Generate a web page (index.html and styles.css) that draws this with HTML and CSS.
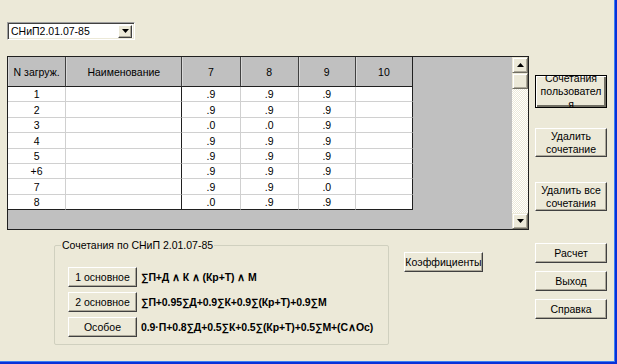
FILE: index.html
```html
<!DOCTYPE html>
<html lang="ru">
<head>
<meta charset="utf-8">
<title>Сочетания</title>
<link rel="stylesheet" href="styles.css">
</head>
<body>
<div class="window">
  <div class="combo">
    <span class="combo-text">СНиП2.01.07-85</span>
    <span class="combo-btn"><svg width="7" height="4" viewBox="0 0 7 4"><path d="M0 0h7L3.5 4z" fill="#000"/></svg></span>
  </div>

  <div class="middle">
    <div class="grid">
      <div class="grid-body">
        <table class="table">
          <colgroup>
            <col class="c1"><col class="c2"><col class="c3"><col class="c3"><col class="c4"><col class="c4">
          </colgroup>
          <thead>
            <tr><th>N загруж.</th><th>Наименование</th><th>7</th><th>8</th><th>9</th><th class="last">10</th></tr>
          </thead>
          <tbody>
            <tr><td>1</td><td class="name"></td><td>.9</td><td>.9</td><td>.9</td><td class="last"></td></tr>
            <tr><td>2</td><td class="name"></td><td>.9</td><td>.9</td><td>.9</td><td class="last"></td></tr>
            <tr><td>3</td><td class="name"></td><td>.0</td><td>.0</td><td>.9</td><td class="last"></td></tr>
            <tr><td>4</td><td class="name"></td><td>.9</td><td>.9</td><td>.9</td><td class="last"></td></tr>
            <tr><td>5</td><td class="name"></td><td>.9</td><td>.9</td><td>.9</td><td class="last"></td></tr>
            <tr><td>+6</td><td class="name"></td><td>.9</td><td>.9</td><td>.9</td><td class="last"></td></tr>
            <tr><td>7</td><td class="name"></td><td>.9</td><td>.9</td><td>.0</td><td class="last"></td></tr>
            <tr class="lastrow"><td>8</td><td class="name"></td><td>.0</td><td>.9</td><td>.9</td><td class="last"></td></tr>
          </tbody>
        </table>
      </div>
      <div class="vscroll">
        <div class="sb-btn"><svg width="7" height="4" viewBox="0 0 7 4"><path d="M3.5 0L7 4H0z" fill="#000"/></svg></div>
        <div class="sb-btn sb-thumb"></div>
        <div class="sb-track"></div>
        <div class="sb-btn"><svg width="7" height="4" viewBox="0 0 7 4"><path d="M0 0h7L3.5 4z" fill="#000"/></svg></div>
      </div>
    </div>

    <div class="side">
      <button class="btn btn-default btn-user"><span class="clip">Сочетания<br>пользовател<br>я</span></button>
      <button class="btn btn-del">Удалить<br>сочетание</button>
      <button class="btn btn-delall">Удалить все<br>сочетания</button>
    </div>
  </div>

  <div class="bottom">
    <div class="group">
      <span class="group-label">Сочетания по СНиП 2.01.07-85</span>
      <div class="group-row">
        <button class="btn btn-small">1 основное</button>
        <span class="formula">∑П+Д ∧ К ∧ (Кр+Т) ∧ М</span>
      </div>
      <div class="group-row">
        <button class="btn btn-small">2 основное</button>
        <span class="formula">∑П+0.95∑Д+0.9∑К+0.9∑(Кр+Т)+0.9∑М</span>
      </div>
      <div class="group-row">
        <button class="btn btn-small">Особое</button>
        <span class="formula">0.9·П+0.8∑Д+0.5∑К+0.5∑(Кр+Т)+0.5∑М+(С∧Ос)</span>
      </div>
    </div>
    <button class="btn btn-coef">Коэффициенты</button>
    <div class="side side-bottom">
      <button class="btn btn-act">Расчет</button>
      <button class="btn btn-act">Выход</button>
      <button class="btn btn-act">Справка</button>
    </div>
  </div>
</div>
</body>
</html>
```

FILE: styles.css
```css
* { box-sizing: border-box; }

html, body {
  margin: 0;
  padding: 0;
  background: #ECE9D8;
}

body {
  font-family: "Liberation Sans", Arial, sans-serif;
  font-size: 10.5px;
  color: #000;
}

.window {
  width: 617px;
  height: 364px;
  padding: 22px 0 0 7px;
  background: #ECE9D8;
  border-right: 2px solid #0831D9;
  border-bottom: 2px solid #0831D9;
  box-shadow: inset -1px -1px 0 #3C7FF1;
  overflow: hidden;
}

/* combo box */
.combo {
  width: 128px;
  height: 18px;
  display: flex;
  align-items: center;
  background: #fff;
  border: 1px solid;
  border-color: #A0A0A0 #fff #fff #A0A0A0;
  box-shadow: inset 1px 1px 0 #404040, inset -1px -1px 0 #ECE9D8;
  padding: 0 2px 0 3px;
}

.combo-text {
  flex: 1;
  font-size: 10.5px;
  line-height: 14px;
}

.combo-btn {
  width: 14px;
  height: 13px;
  display: flex;
  align-items: center;
  justify-content: center;
  background: #ECE9D8;
  border: 1px solid;
  border-color: #fff #404040 #404040 #fff;
  box-shadow: inset -1px -1px 0 #ACA899;
}

/* middle */
.middle {
  display: flex;
  margin-top: 16px;
}

.grid {
  width: 522px;
  height: 174px;
  border: 1px solid #202020;
  display: flex;
}

.grid-body {
  flex: 1;
  background: #C0C0C0;
  overflow: hidden;
}

.table {
  border-collapse: separate;
  border-spacing: 0;
  table-layout: fixed;
  width: 405px;
}

.c1 { width: 58px; }
.c2 { width: 116px; }
.c3 { width: 58px; }
.c4 { width: 57px; }

.table th {
  height: 30px;
  background: #C0C0C0;
  font-weight: normal;
  font-size: 10.5px;
  text-align: center;
  padding: 0;
  border-right: 1px solid #404040;
  border-bottom: 1px solid #202020;
  box-shadow: inset 1px 0 0 #D8D8D8;
  white-space: nowrap;
}

.table th.last { border-right: 1px solid #202020; }

.table td {
  height: 15.4px;
  padding: 0;
  background: #fff;
  text-align: center;
  font-size: 10.5px;
  line-height: 13px;
  border-right: 1px solid #D0D0D0;
  border-bottom: 1px solid #D0D0D0;
  vertical-align: bottom;
}

.table td.name { border-right-color: #202020; }
.table td.last { border-right: 1px solid #202020; }
.table .lastrow td { border-bottom-color: #202020; }

/* vertical scrollbar */
.vscroll {
  width: 16px;
  display: flex;
  flex-direction: column;
}

.sb-btn {
  height: 16px;
  display: flex;
  align-items: center;
  justify-content: center;
  background: #ECE9D8;
  border: 1px solid;
  border-color: #ECE9D8 #716F64 #716F64 #ECE9D8;
  box-shadow: inset 1px 1px 0 #fff, inset -1px -1px 0 #ACA899;
}

.sb-thumb { height: 16px; }

.sb-track {
  flex: 1;
  background-color: #F4F2EA;
  background-image: repeating-conic-gradient(#fff 0 25%, #ECE9D8 0 50%);
  background-size: 2px 2px;
}

/* buttons */
.btn {
  font-family: "Liberation Sans", Arial, sans-serif;
  font-size: 10.5px;
  line-height: 13px;
  color: #000;
  background: #ECE9D8;
  padding: 0;
  margin: 0;
  border: 1px solid;
  border-color: #fff #404040 #404040 #fff;
  box-shadow: inset -1px -1px 0 #ACA899;
  display: flex;
  align-items: center;
  justify-content: center;
  text-align: center;
  white-space: nowrap;
}

.btn-default {
  border: 1px solid #000;
  box-shadow: inset 1px 1px 0 #fff, inset -2px -2px 0 #716F64;
}

.side {
  display: flex;
  flex-direction: column;
  width: 72px;
  margin-left: 6px;
}

.side .btn { width: 72px; }

.btn-user {
  height: 33px;
  margin-top: 19px;
  overflow: hidden;
}

.clip {
  display: block;
  white-space: nowrap;
}

.btn-del {
  height: 29px;
  margin-top: 20px;
}

.btn-delall {
  height: 29px;
  margin-top: 25px;
}

/* bottom */
.bottom {
  display: flex;
  align-items: flex-start;
  margin-top: 13px;
}

.group {
  position: relative;
  width: 335px;
  height: 100px;
  margin-top: 2px;
  margin-left: 47px;
  border: 1px solid #D0D0BF;
  border-radius: 2px;
  padding: 21px 0 0 13px;
  display: flex;
  flex-direction: column;
  gap: 5px;
}

.group-label {
  position: absolute;
  top: -7px;
  left: 6px;
  padding: 0 1px;
  background: #ECE9D8;
  line-height: 13px;
}

.group-row {
  display: flex;
  align-items: center;
  gap: 4px;
  height: 20px;
}

.btn-small {
  width: 69px;
  height: 20px;
}

.formula {
  font-family: "Liberation Sans Narrow", "Liberation Sans", Arial, sans-serif;
  font-weight: bold;
  font-size: 10.5px;
  letter-spacing: -0.1px;
  white-space: nowrap;
}

.btn-coef {
  width: 79px;
  height: 20px;
  margin-left: 15px;
  margin-top: 9px;
}

.side-bottom {
  margin-left: 52px;
  gap: 8px;
}

.btn-act { height: 20px; }
```
